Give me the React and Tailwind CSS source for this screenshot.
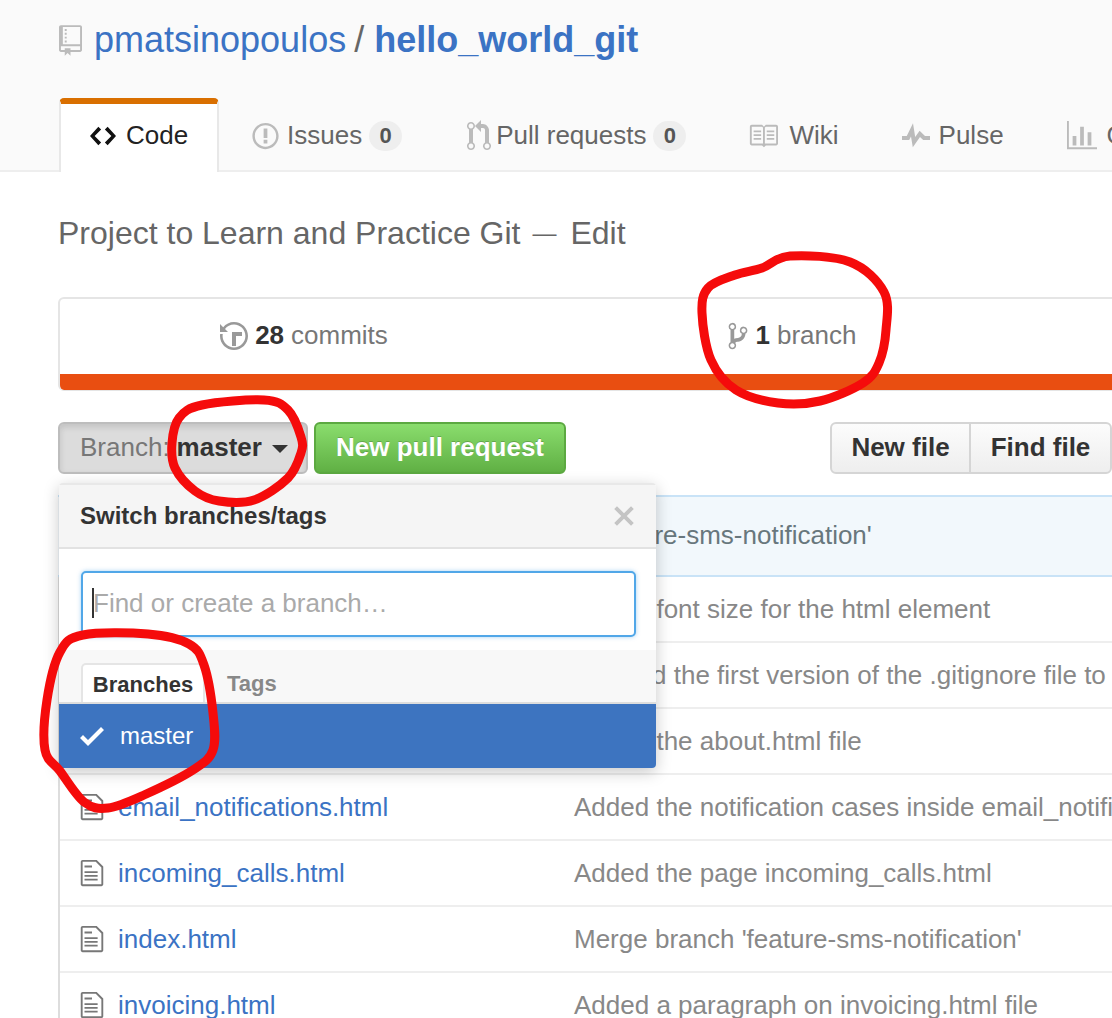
const icons = {
  repo: ["0 0 12 16", "M4 9H3V8h1v1zm0-3H3v1h1V6zm0-2H3v1h1V4zm0-2H3v1h1V2zm8-1v12c0 .55-.45 1-1 1H6v2l-1.5-1.5L3 16v-2H1c-.55 0-1-.45-1-1V1c0-.55.45-1 1-1h10c.55 0 1 .45 1 1zm-1 10H1v2h2v-1h3v1h5v-2zm0-10H2v9h9V1z"],
  code: ["0 0 14 16", "M9.5 3L8 4.5 11.5 8 8 11.5 9.5 13 14 8 9.5 3zm-5 0L0 8l4.5 5L6 11.5 2.5 8 6 4.5 4.5 3z"],
  issue: ["0 0 14 16", "M7 2.3c3.14 0 5.7 2.56 5.7 5.7s-2.56 5.7-5.7 5.7A5.71 5.71 0 0 1 1.3 8c0-3.14 2.56-5.7 5.7-5.7zM7 1C3.14 1 0 4.14 0 8s3.14 7 7 7 7-3.14 7-7-3.14-7-7-7zm1 3H6v5h2V4zm0 6H6v2h2v-2z"],
  pull: ["0 0 12 16", "M11 11.28V5c-.03-.78-.34-1.47-.94-2.06C9.46 2.35 8.78 2.03 8 2H7V0L4 3l3 3V4h1c.27.02.48.11.69.31.21.2.3.42.31.69v6.28A1.993 1.993 0 0 0 10 15a1.993 1.993 0 0 0 1-3.72zm-1 2.92c-.66 0-1.2-.55-1.2-1.2 0-.65.55-1.2 1.2-1.2.65 0 1.2.55 1.2 1.2 0 .65-.55 1.2-1.2 1.2zM4 3c0-1.11-.89-2-2-2a1.993 1.993 0 0 0-1 3.72v6.56A1.993 1.993 0 0 0 2 15a1.993 1.993 0 0 0 1-3.72V4.72c.59-.34 1-.98 1-1.72zm-.8 10c0 .66-.55 1.2-1.2 1.2-.65 0-1.2-.55-1.2-1.2 0-.65.55-1.2 1.2-1.2.65 0 1.2.55 1.2 1.2zM2 4.2C1.34 4.2.8 3.65.8 3c0-.65.55-1.2 1.2-1.2.65 0 1.2.55 1.2 1.2 0 .65-.55 1.2-1.2 1.2z"],
  book: ["0 0 16 16", "M3 5h4v1H3V5zm0 3h4V7H3v1zm0 2h4V9H3v1zm11-5h-4v1h4V5zm0 2h-4v1h4V7zm0 2h-4v1h4V9zm2-6v9c0 .55-.45 1-1 1H9.5l-1 1-1-1H2c-.55 0-1-.45-1-1V3c0-.55.45-1 1-1h5.5l1 1 1-1H15c.55 0 1 .45 1 1zm-8 .5L7.5 3H2v9h6V3.5zm7-.5H9.5l-.5.5V12h6V3z"],
  pulse: ["0 0 14 16", "M11.5 8L8.8 5.4 6.6 8.5 5.5 1.6 2.38 8H0v2h3.6l.9-1.8.9 5.4L9 8.5l1.6 1.5H14V8h-2.5z"],
  graph: ["0 0 16 16", "M16 14v1H0V0h1v14h15zM5 13H3V8h2v5zm4 0H7V3h2v10zm4 0h-2V6h2v7z"],
  history: ["0 0 14 16", "M8 13H6V6h5v2H8v5zM7 1C4.81 1 2.87 2.02 1.59 3.59L0 2v4h4L2.5 4.5C3.55 3.17 5.17 2.3 7 2.3c3.14 0 5.7 2.56 5.7 5.7s-2.56 5.7-5.7 5.7A5.71 5.71 0 0 1 1.3 8c0-.34.03-.67.09-1H.08C.03 7.33 0 7.66 0 8c0 3.86 3.14 7 7 7s7-3.14 7-7-3.14-7-7-7z"],
  branch: ["0 0 10 16", "M10 5c0-1.11-.89-2-2-2a1.993 1.993 0 0 0-1 3.72v.3c-.02.52-.23.98-.63 1.38-.4.4-.86.61-1.38.63-.83.02-1.48.16-2 .45V4.72a1.993 1.993 0 0 0-1-3.72C.88 1 0 1.89 0 3a2 2 0 0 0 1 1.72v6.56c-.59.35-1 .99-1 1.72 0 1.11.89 2 2 2 1.11 0 2-.89 2-2 0-.53-.2-1-.53-1.36.09-.06.48-.41.59-.47.25-.11.56-.17.94-.17 1.05-.05 1.95-.45 2.75-1.25S8.95 7.77 9 6.73h-.02C9.59 6.37 10 5.73 10 5zM2 1.8c.66 0 1.2.55 1.2 1.2 0 .65-.55 1.2-1.2 1.2C1.35 4.2.8 3.65.8 3c0-.65.55-1.2 1.2-1.2zm0 12.41c-.66 0-1.2-.55-1.2-1.2 0-.65.55-1.2 1.2-1.2.65 0 1.2.55 1.2 1.2 0 .65-.55 1.2-1.2 1.2zm6-8c-.66 0-1.2-.55-1.2-1.2 0-.65.55-1.2 1.2-1.2.65 0 1.2.55 1.2 1.2 0 .65-.55 1.2-1.2 1.2z"],
  check: ["0 0 12 16", "M12 5l-8 8-4-4 1.5-1.5L4 10l6.5-6.5L12 5z"],
  x: ["0 0 12 16", "M7.48 8l3.75 3.75-1.48 1.48L6 9.48l-3.75 3.75-1.48-1.48L4.52 8 .77 4.25l1.48-1.48L6 6.52l3.75-3.75 1.48 1.48L7.48 8z"],
  file: ["0 0 12 16", "M6 5H2V4h4v1zM2 8h7V7H2v1zm0 2h7V9H2v1zm0 2h7v-1H2v1zm10-7.5V14c0 .55-.45 1-1 1H1c-.55 0-1-.45-1-1V2c0-.55.45-1 1-1h7.5L12 4.5zM11 5L8 2H1v12h10V5z"],
}

function Octicon({ name, className }) {
  const [viewBox, d] = icons[name]
  return (
    <svg viewBox={viewBox} className={className} fill="currentColor" aria-hidden="true">
      <path fillRule="evenodd" d={d} />
    </svg>
  )
}

// closed smooth curve through the hand-drawn marker points
function scribble(pts) {
  const n = pts.length
  let d = `M${pts[0][0]} ${pts[0][1]}`
  for (let i = 0; i < n; i++) {
    const p0 = pts[(i - 1 + n) % n]
    const p1 = pts[i]
    const p2 = pts[(i + 1) % n]
    const p3 = pts[(i + 2) % n]
    d += ` C${p1[0] + (p2[0] - p0[0]) / 6} ${p1[1] + (p2[1] - p0[1]) / 6} ${p2[0] - (p3[0] - p1[0]) / 6} ${p2[1] - (p3[1] - p1[1]) / 6} ${p2[0]} ${p2[1]}`
  }
  return d
}

const marks = [
  [[790, 256], [850, 262], [884, 292], [886, 330], [879, 363], [863, 383], [820, 401], [778, 403], [736, 390], [711, 360], [702, 313], [708, 288], [735, 275], [762, 268]],
  [[264, 400], [288, 410], [301, 437], [301, 453], [288, 478], [254, 500], [219, 501], [195, 491], [175, 468], [172, 443], [179, 418], [202, 405]],
  [[83, 635], [148, 634], [189, 644], [204, 665], [213, 713], [213, 750], [193, 770], [144, 795], [108, 808], [84, 802], [60, 771], [45, 750], [47, 700], [60, 652]],
]

const files = [
  { name: "stylesheets", msg: "Added font size for the html element" },
  { name: ".gitignore", msg: "Created the first version of the .gitignore file to ignore files" },
  { name: "about.html", msg: "Added the about.html file" },
  { name: "email_notifications.html", msg: "Added the notification cases inside email_notifications.html" },
  { name: "incoming_calls.html", msg: "Added the page incoming_calls.html" },
  { name: "index.html", msg: "Merge branch 'feature-sms-notification'" },
  { name: "invoicing.html", msg: "Added a paragraph on invoicing.html file" },
]

function Badge({ children }) {
  return (
    <span className="ml-[7px] flex h-[30px] w-[33px] items-center justify-center rounded-full bg-[#eeeeee] text-[22px] font-bold text-[#555]">
      {children}
    </span>
  )
}

export default function App() {
  return (
    <div className="relative h-[1018px] w-[1112px] overflow-hidden bg-white font-['Liberation_Sans',Arial,sans-serif]">
      <header className="box-border h-[172px] border-b-2 border-[#eeeeee] bg-[#fafafa] pl-[58px]">
        <div className="flex h-[80px] items-center text-[36px] text-[#666]">
          <Octicon name="repo" className="ml-px h-[31px] w-[23px] text-[#bbbbbb]" />
          <a className="ml-[12px] text-[#3b73c4]">pmatsinopoulos</a>
          <span className="ml-[8px] mr-[10px]">/</span>
          <a className="font-bold text-[#3b73c4]">hello_world_git</a>
        </div>
        <nav className="ml-px mt-[18px] flex h-[74px] w-[1300px] whitespace-nowrap text-[26px] text-[#666]">
          <a className="box-border flex w-[160px] shrink-0 items-center rounded-t-[5px] border-x-2 border-t-[6px] border-x-[#e8e8e8] border-t-[#d96f00] bg-white pb-[5px] pl-[29px] text-[#222]">
            <Octicon name="code" className="h-[30px] w-[26px] text-[#111]" />
            <span className="ml-[10px]">Code</span>
          </a>
          <a className="flex shrink-0 items-center pl-[33px] pr-[32px] pt-px">
            <Octicon name="issue" className="h-[30px] w-[27px] text-[#bbbbbb]" />
            <span className="ml-[8px]">Issues</span>
            <Badge>0</Badge>
          </a>
          <a className="flex shrink-0 items-center pl-[33px] pr-[32px] pt-px">
            <Octicon name="pull" className="h-[32px] w-[24px] text-[#bbbbbb]" />
            <span className="ml-[5px]">Pull requests</span>
            <Badge>0</Badge>
          </a>
          <a className="flex shrink-0 items-center pl-[30px] pr-[32px] pt-px">
            <Octicon name="book" className="h-[30px] w-[30px] text-[#bbbbbb]" />
            <span className="ml-[11px]">Wiki</span>
          </a>
          <a className="flex shrink-0 items-center pl-[31px] pr-[32px] pt-px">
            <Octicon name="pulse" className="h-[32px] w-[28px] text-[#bbbbbb]" />
            <span className="ml-[9px]">Pulse</span>
          </a>
          <a className="flex shrink-0 items-center pl-[31px] pt-px">
            <Octicon name="graph" className="h-[30px] w-[30px] text-[#bbbbbb]" />
            <span className="ml-[10px]">Graphs</span>
          </a>
        </nav>
      </header>

      <main className="pl-[58px]">
        <p className="flex h-[123px] items-center whitespace-pre pb-px text-[32px] text-[#666]">
          Project to Learn and Practice Git<span className="ml-[12px] mr-[14px] text-[24px]">—</span>Edit
        </p>

        <section className="mt-[2px] box-border h-[94px] w-[1960px] overflow-hidden rounded-[6px] border-x-2 border-b border-t-2 border-[#e5e5e5]">
          <div className="flex h-[75px] pb-[2px] text-[26px] text-[#777]">
            <div className="flex w-[488px] items-center justify-center">
              <Octicon name="history" className="h-[32px] w-[28px] text-[#999]" />
              <span className="ml-[7px] font-bold text-[#333]">28</span>
              <span className="ml-[7px]">commits</span>
            </div>
            <div className="flex w-[488px] items-center justify-center">
              <Octicon name="branch" className="h-[30px] w-[20px] text-[#999]" />
              <span className="ml-[8px] font-bold text-[#333]">1</span>
              <span className="ml-[7px]">branch</span>
            </div>
          </div>
          <div className="h-[16px] bg-[#e94e11]" />
        </section>

        <div className="mt-[31px] flex h-[52px] w-[1054px] justify-between text-[26px] font-bold">
          <div className="relative flex">
            <button className="box-border flex h-[52px] w-[250px] items-center rounded-[6px] border-2 border-[#bdbdbd] bg-[#dcdcdc] pb-[2px] pl-[20px] text-[#333] shadow-[inset_0_3px_6px_rgba(0,0,0,0.12)]">
              <span className="font-normal text-[#777]">Branch:</span>
              <span className="ml-[7px]">master</span>
              <span className="ml-[10px] mt-[3px] h-0 w-0 border-x-[8px] border-t-[8px] border-x-transparent border-t-[#333]" />
            </button>
            <button className="ml-[6px] box-border flex h-[52px] w-[252px] items-center justify-center rounded-[6px] border-2 border-[#5ca941] bg-linear-to-b from-[#8add6d] to-[#60b044] pb-[2px] text-white [text-shadow:0_-1px_0_rgba(0,0,0,0.2)]">
              New pull request
            </button>

            <div className="absolute left-px top-[61px] z-10 box-border w-[597px] overflow-hidden rounded-[4px] bg-white shadow-[0_4px_16px_rgba(0,0,0,0.22)]">
              <div className="box-border flex h-[66px] items-center justify-between border-y-2 border-t-[#e8e8e8] border-b-[#e2e2e2] bg-[#f5f5f5] pl-[21px] pr-[20px]">
                <span className="text-[24px] font-bold text-[#333]">Switch branches/tags</span>
                <Octicon name="x" className="h-[30px] w-[24px] text-[#c4c4c4]" />
              </div>
              <div className="box-border h-[101px] bg-white pl-[22px] pr-[20px] pt-[22px]">
                <div className="box-border flex h-[66px] items-center rounded-[5px] border-2 border-[#51a7e8] bg-white pb-[2px] pl-[9px] text-[26px] font-normal text-[#aaaaaa] shadow-[0_0_4px_rgba(81,167,232,0.5)]">
                  <span className="h-[30px] w-[2px] bg-[#333]" />
                  <span className="-ml-px">Find or create a branch…</span>
                </div>
              </div>
              <div className="box-border flex h-[54px] items-end border-b-2 border-[#dddddd] bg-[#f8f8f8] pl-[22px] text-[22px] font-bold">
                <span className="box-border flex h-[39px] w-[124px] items-center justify-center rounded-t-[5px] border-x-2 border-t-2 border-[#e5e5e5] bg-white pt-[2px] text-[#333]">
                  Branches
                </span>
                <span className="ml-[22px] flex h-[39px] items-center pt-[2px] text-[#888]">Tags</span>
              </div>
              <div className="flex h-[64px] items-center bg-[#3d74c0] pl-[21px] text-[24px] font-normal text-white">
                <Octicon name="check" className="h-[32px] w-[24px]" />
                <span className="ml-[16px]">master</span>
              </div>
            </div>
          </div>

          <div className="flex h-[52px] text-[#333]">
            <button className="box-border h-[52px] w-[141px] rounded-l-[6px] border-2 border-[#d5d5d5] bg-linear-to-b from-[#fcfcfc] to-[#eeeeee] pb-[2px]">
              New file
            </button>
            <button className="-ml-[2px] box-border h-[52px] w-[143px] rounded-r-[6px] border-2 border-[#d5d5d5] bg-linear-to-b from-[#fcfcfc] to-[#eeeeee] pb-[2px]">
              Find file
            </button>
          </div>
        </div>

        <section className="mt-[21px] w-[1960px] border-l-2 border-[#dddddd] text-[26px]">
          <div className="-ml-[2px] box-border flex h-[82px] items-center border-y-2 border-[#c9e3f7] bg-[#f2f8fc] pb-[2px] pl-[366px] whitespace-nowrap text-[#68777d]">
            Merge branch 'feature-sms-notification'
          </div>
          {files.map((file) => (
            <div key={file.name} className="box-border flex h-[66px] items-center border-b-2 border-[#eeeeee] whitespace-nowrap">
              <Octicon name="file" className="ml-[20px] h-[30px] w-[24px] text-[#777]" />
              <a className="ml-[14px] w-[456px] text-[#3b73c4]">{file.name}</a>
              <span className="text-[#888]">{file.msg}</span>
            </div>
          ))}
        </section>
      </main>

      <svg className="pointer-events-none absolute inset-0 z-20" width="1112" height="1018" fill="none" stroke="#f50b0b" strokeWidth="9" strokeLinejoin="round">
        {marks.map((pts, i) => (
          <path key={i} d={scribble(pts)} />
        ))}
      </svg>
    </div>
  )
}
